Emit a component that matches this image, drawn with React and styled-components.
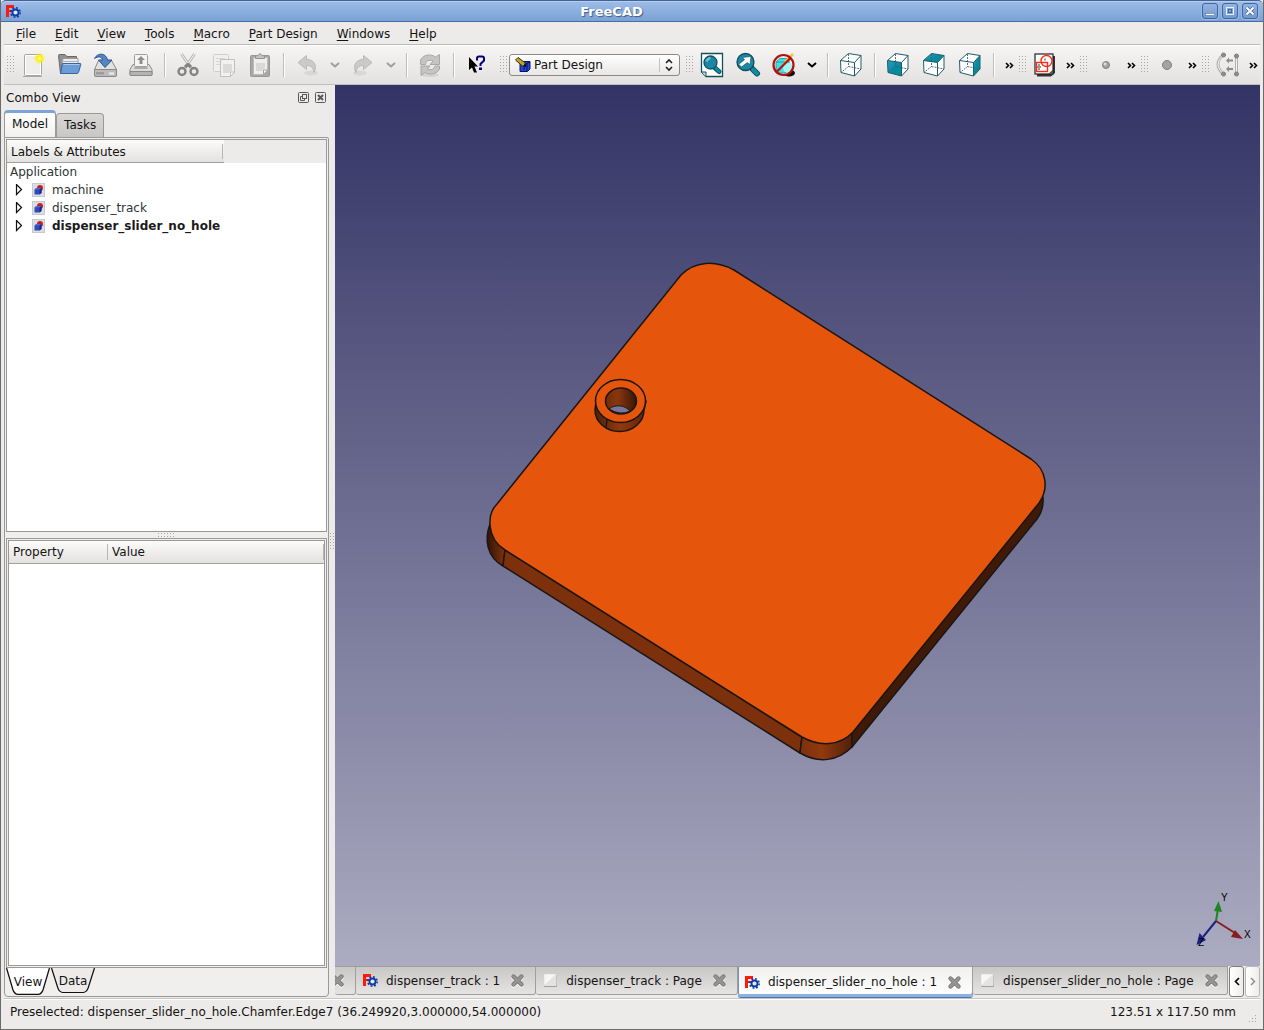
import { useState } from "react";
import styled, { createGlobalStyle, css } from "styled-components";

const GlobalStyle = createGlobalStyle`
    * {
        box-sizing: border-box;
    }

    body {
        margin: 0;
        background: #edebe9;
        color: #141414;
        font-family: "DejaVu Sans", Verdana, sans-serif;
        font-size: 12px;
        line-height: 18px;
    }

    button, select {
        margin: 0;
        padding: 0;
        border: 0;
        background: none;
        color: inherit;
        font: inherit;
    }

    svg {
        display: block;
        flex: none;
    }
`

const dots = css`
    background-image: conic-gradient(at 1px 1px, transparent 75%, #a9a7a5 0);
    background-size: 3px 3px;
`

const Window = styled.div`
    display: flex;
    flex-direction: column;
    height: 100vh;
    border: 1px solid #6b6b6b;
    border-top: 0;
    background: #edebe9;
`

/* title bar */

const TitleBar = styled.header`
    display: flex;
    align-items: center;
    height: 22px;
    padding: 0 5px;
    border-top: 1px solid #456290;
    border-bottom: 1px solid #4a6c9e;
    border-radius: 5px 5px 0 0;
    background: linear-gradient(#9dbce8, #7aa2d6);
    box-shadow: inset 0 1px #b4cdf0;
`

const Title = styled.h1`
    flex: 1;
    margin: 0;
    padding-top: 2px;
    font-size: 13px;
    line-height: 20px;
    color: #fff;
    text-align: center;
    text-shadow: 1px 1px 1px #3d5c8a;
`

const WindowButtons = styled.div`
    display: flex;
    gap: 4px;
`

const WindowButton = styled.button`
    width: 16px;
    height: 16px;
    border: 1px solid #43679b;
    border-radius: 3px;
    background: linear-gradient(#93b4e3, #7199cf);
    box-shadow: 0 0 0 1px #9bbae5;
`

/* menus */

const MenuBar = styled.nav`
    display: flex;
    align-items: center;
    gap: 1px;
    height: 23px;
    margin: 0 3px;
    padding: 0 3px;
    border-bottom: 1px solid #bcbab8;
`

const MenuButton = styled.button`
    padding: 2px 9px 0;
    line-height: 20px;

    u {
        text-underline-offset: 2px;
    }
`

/* toolbars */

const ToolBars = styled.div`
    display: flex;
    align-items: center;
    height: 40px;
    margin: 0 3px;
    border-top: 1px solid #fff;
    border-bottom: 1px solid #c2c0be;
    background: linear-gradient(#f6f5f4, #e4e2e0);
`

const ToolBar = styled.div`
    display: flex;
    align-items: center;
    flex: ${props => props.$grow ? '1' : 'none'};
    margin-right: ${props => props.$gap ? '2px' : '0'};
`

const Handle = styled.span`
    width: 7px;
    height: 18px;
    margin: 0 1px 0 3px;
    ${dots}
`

const ToolButton = styled.button`
    display: flex;
    align-items: center;
    justify-content: center;
    width: ${props => props.$arrow ? '20px' : '36px'};
    height: 36px;
`

const Separator = styled.span`
    width: 2px;
    height: 24px;
    margin: 0 4px 0 5px;
    border-left: 1px solid #bfbdbb;
    background: #fff;
`

const ExtensionButton = styled.button`
    display: flex;
    align-items: center;
    justify-content: center;
    width: 14px;
    height: 36px;
    margin-left: ${props => props.$end ? 'auto' : '0'};
`

const ComboBox = styled.label`
    position: relative;
    width: 171px;
    margin: 0 1px;

    svg {
        position: absolute;
        top: 3px;
        left: 6px;
        pointer-events: none;
    }

    svg:last-child {
        left: auto;
        right: 5px;
    }
`

const WorkbenchSelect = styled.select`
    appearance: none;
    display: block;
    width: 100%;
    height: 22px;
    padding-left: 24px;
    border: 1px solid #8b8987;
    border-radius: 3px;
    background: linear-gradient(#fff, #e9e7e5);
    line-height: 18px;
`

/* main area */

const Main = styled.main`
    display: flex;
    flex: 1;
    min-height: 0;
    padding: 0 3px;
`

const Dock = styled.aside`
    display: flex;
    flex-direction: column;
    width: 325px;
`

const DockTitle = styled.div`
    display: flex;
    align-items: center;
    gap: 6px;
    height: 25px;
    padding: 0 3px 0 2px;
`

const DockName = styled.h2`
    flex: 1;
    margin: 0;
    font-size: 12px;
    font-weight: normal;
`

const TinyButton = styled.button`
    width: 11px;
    height: 11px;
`

const TabRow = styled.div`
    display: flex;
    align-items: flex-end;
    height: 27px;
`

const DockTab = styled.button`
    height: ${props => props.$active ? '27px' : '24px'};
    padding: 0 7px 2px;
    border: 1px solid #9b9997;
    border-bottom: 0;
    border-radius: 4px 4px 0 0;
    background: linear-gradient(#d9d7d5, #c9c7c5);

    ${props => props.$active && css`
        border-top: 3px solid #7ba4da;
        background: linear-gradient(#fff, #f1f0ee);
    `}
`

const TabPane = styled.section`
    display: flex;
    flex-direction: column;
    flex: 1;
    min-height: 0;
    margin-bottom: 1px;
    padding: 1px 1px 0;
    border: 1px solid #9b9997;
    border-radius: 0 2px 4px 4px;
    background: #f0efed;
`

const TreeBox = styled.div`
    flex: 394;
    min-height: 0;
    border: 1px solid #9b9997;
    background: #fff;
`

const TreeHeader = styled.div`
    height: 23px;
    background: #edebe9;
`

const HeaderCell = styled.div`
    position: relative;
    width: 217px;
    height: 23px;
    padding: 0 4px;
    border-bottom: 1px solid #a3a19f;
    background: linear-gradient(#fbfbfa, #e4e2e0);
    line-height: 24px;

    &::after {
        content: "";
        position: absolute;
        top: 4px;
        right: 1px;
        width: 1px;
        height: 15px;
        background: #b8b6b4;
    }
`

const Tree = styled.ul`
    margin: 0;
    padding: 0 3px;
    color: #2e3436;
    list-style: none;
`

const TreeRow = styled.li`
    display: flex;
    align-items: center;
    height: 18px;
    color: ${props => props.$active ? '#1a1a1a' : 'inherit'};
    font-weight: ${props => props.$active ? 'bold' : 'normal'};
`

const Expander = styled.button`
    width: 22px;
    height: 14px;
    padding-left: 5px;
`

const RowLabel = styled.span`
    padding-left: 7px;
`

const Splitter = styled.div`
    display: flex;
    align-items: center;
    justify-content: center;
    height: 6px;
`

const SplitterDots = styled.span`
    width: ${props => props.$vertical ? '4px' : '18px'};
    height: ${props => props.$vertical ? '18px' : '4px'};
    ${dots}
`

const SideSplitter = styled(Splitter)`
    width: 6px;
    height: auto;
`

const PropertyBox = styled.div`
    flex: 429;
    min-height: 0;
    padding: 1px;
    border: 1px solid #9b9997;
`

const PropertyView = styled.div`
    height: 100%;
    border: 1px solid #9b9997;
    background: #fff;
`

const PropertyTable = styled.table`
    width: 100%;
    border-collapse: collapse;
    table-layout: fixed;
`

const PropertyHead = styled.th`
    width: ${props => props.$width || 'auto'};
    padding: 0;
    border-bottom: 1px solid #a3a19f;
    background: linear-gradient(#fbfbfa, #e4e2e0);
    font-weight: normal;
    text-align: left;
`

const HeadText = styled.div`
    height: 16px;
    margin: 3px 0;
    padding: 0 4px;
    border-right: 1px solid #b8b6b4;
    line-height: 17px;
`

const BottomTabs = styled.div`
    display: flex;
    align-items: flex-start;
    gap: 1px;
    height: 28px;
`

const BottomTab = styled.button`
    position: relative;
    width: 44px;
    height: ${props => props.$active ? '27px' : '25px'};

    svg {
        position: absolute;
        top: 0;
        left: 0;
        width: 100%;
        height: 100%;
    }

    span {
        position: relative;
    }
`

/* documents */

const Documents = styled.section`
    display: flex;
    flex-direction: column;
    flex: 1;
    min-width: 0;
`

const Viewport = styled.div`
    position: relative;
    flex: 1;
    min-height: 0;
    background: linear-gradient(#333365, #ababc1);
`

const Scene = styled.svg`
    width: 100%;
    height: 100%;
`

const Triad = styled.svg`
    position: absolute;
    right: 2px;
    bottom: 17px;
`

const DocumentTabs = styled.div`
    display: flex;
    align-items: flex-start;
    height: 32px;
`

const DocumentTab = styled.div`
    display: flex;
    align-items: center;
    flex: ${props => props.$last ? '1' : 'none'};
    gap: 8px;
    height: 29px;
    padding: 0 ${props => props.$last ? '7px' : '10px'} 0 7px;
    border: 1px solid #a09e9c;
    border-width: 1px 1px 1px 0;
    border-radius: 0 0 3px 3px;
    background: linear-gradient(#c9c7c5, #e6e4e2);

    ${props => props.$active && css`
        height: 32px;
        border-bottom: 1px solid #4a76b0;
        background: linear-gradient(#f1f0ee, #fff);
        box-shadow: inset 0 -3px #8cb3e0, inset 1px 0 #6f93c4;
    `}

    ${props => props.$clipped && css`
        width: 21px;
        padding-left: 0;
        justify-content: flex-end;
        overflow: hidden;
    `}
`

const TabLabel = styled.button`
    display: flex;
    align-items: center;
    gap: 8px;
    white-space: nowrap;
`

const CloseButton = styled.button`
    flex: none;
    width: 15px;
    height: 15px;
    margin-left: 2px;

    svg {
        filter: drop-shadow(0 1px 0 #fff);
    }
`

const ScrollButton = styled.button`
    display: flex;
    flex: none;
    align-items: center;
    justify-content: center;
    width: 15px;
    height: 31px;
    margin-left: 1px;
    border: 1px solid ${props => props.disabled ? '#bab8b6' : '#7f7d7b'};
    border-radius: 3px;
    background: linear-gradient(90deg, #fff, #efedeb);
    color: ${props => props.disabled ? '#8a8886' : '#000'};
`

const StatusBar = styled.footer`
    position: relative;
    display: flex;
    align-items: center;
    justify-content: space-between;
    height: 31px;
    margin: 0 3px;
    padding: 0 24px 4px 6px;
    border-top: 1px solid #c8c6c4;
    box-shadow: inset 0 1px #fff;
`

const SizeGrip = styled.span`
    position: absolute;
    right: 2px;
    bottom: 5px;
    width: 12px;
    height: 12px;
    clip-path: polygon(100% 0, 100% 100%, 0 100%);
    ${dots}
`

/* icons */

const teal = '#0a8ea5';
const tealDark = '#14505c';

const FreeCadIcon = () => (
    <svg width="15" height="15" viewBox="0 0 15 15">
        <g fill="#ff1a0a">
            <rect x="0" y="1" width="3" height="12" />
            <rect x="0" y="1" width="8" height="3" />
            <rect x="3" y="6" width="3" height="2" />
        </g>
        <circle cx="9.5" cy="8.5" r="4.7" fill="none" stroke="#0c3ba6" strokeWidth="1.6" strokeDasharray="1.8 1.89" />
        <circle cx="9.5" cy="8.5" r="3" fill="#dfe9f8" stroke="#0c3ba6" strokeWidth="1.8" />
    </svg>
);

const PageIcon = () => (
    <svg width="15" height="15" viewBox="0 0 15 15">
        <rect x="1" y="2" width="13" height="12" rx="1" fill="#a3a1a0" />
        <rect x="1" y="1" width="12.5" height="12" rx="1" fill="#e4e3e2" />
        <path d="M1.5 1.5H12.5L1.5 12Z" fill="#f7f7f6" />
    </svg>
);

const CrossIcon = () => (
    <svg width="15" height="15" viewBox="0 0 15 15">
        <path d="M3.5 3.5 11.5 11.5M11.5 3.5 3.5 11.5" stroke="#777573" strokeWidth="4.4" strokeLinecap="round" />
        <path d="M3.5 3.5 11.5 11.5M11.5 3.5 3.5 11.5" stroke="#969492" strokeWidth="2.6" strokeLinecap="round" />
    </svg>
);

const DocIcon = () => (
    <svg width="13" height="14" viewBox="0 0 13 14">
        <rect x="0.5" y="0.5" width="12" height="13" fill="#dcdde2" stroke="#c6c8cd" />
        <circle cx="8" cy="5" r="3" fill="#c32222" />
        <path d="M2.5 6.5 4.5 5H9.5V10L7.5 11.5H2.5Z" fill="#3049bd" />
        <path d="M2.5 6.5 4.5 5H9.5L7.5 6.5Z" fill="#5068cf" />
        <path d="M7.5 6.5 9.5 5V10L7.5 11.5Z" fill="#182a83" />
    </svg>
);

const NewIcon = () => (
    <svg width="26" height="26" viewBox="0 0 26 26">
        <defs>
            <radialGradient id="glow">
                <stop offset="0" stopColor="#fffde0" />
                <stop offset="0.4" stopColor="#fff200" />
                <stop offset="1" stopColor="#fff200" stopOpacity="0" />
            </radialGradient>
        </defs>
        <path d="M3 24.5H22" stroke="#aaa8a6" />
        <rect x="4.5" y="2.5" width="17" height="21" rx="1" fill="#ededeb" stroke="#a6a4a2" />
        <rect x="5.5" y="3.5" width="15" height="19" fill="none" stroke="#fff" />
        <circle cx="19.5" cy="6.5" r="6" fill="url(#glow)" />
    </svg>
);

const OpenIcon = () => (
    <svg width="26" height="26" viewBox="0 0 26 26">
        <path d="M2.5 3.5Q2.5 2.5 3.5 2.5H9L11 4.5H20.5V10H7L4.5 21.5Z" fill="#91908e" stroke="#696765" />
        <path d="M7 6.5H22V12H6Z" fill="#ededec" stroke="#9b9997" />
        <path d="M6 9.5H21" stroke="#b0aeac" />
        <path d="M6.5 11.5H24.5Q25 11.5 24.8 12.5L22.5 20.5Q22 21.5 21 21.5H4.5Z" fill="#6b9dd6" stroke="#3465a4" />
        <path d="M7.5 12.5H23.5" stroke="#a9c8ec" />
    </svg>
);

const SaveIcon = () => (
    <svg width="26" height="26" viewBox="0 0 26 26">
        <path d="M6.5 8.5H19.5L24.5 17.5V23Q24.5 24.5 23 24.5H3.5Q2.5 24.5 2.5 23V17.5Z" fill="#e2e1df" stroke="#8b8987" />
        <path d="M2.5 17.5H24.5V23Q24.5 24.5 23 24.5H3.5Q2.5 24.5 2.5 23Z" fill="#bdbbb9" stroke="#8b8987" />
        <path d="M5 20V22.5M7 20V22.5M9 20V22.5M11 20V22.5" stroke="#7e7c7a" />
        <path d="M17 21.5H22" stroke="#efefee" strokeWidth="2" />
        <path d="M2.5 6.5C5 1 14 0 15.5 8H20L13 15.5 6.5 8H10.5C10 4.5 6 4 2.5 6.5Z" fill="#5584bf" stroke="#2b5690" />
    </svg>
);

const PrintIcon = () => (
    <svg width="26" height="26" viewBox="0 0 26 26">
        <path d="M5 12.5H21L24 17.5V22.5Q24 23.5 23 23.5H3Q2 23.5 2 22.5V17.5Z" fill="#dddcda" stroke="#8b8987" />
        <path d="M7 14.5H19L20 17H6Z" fill="#adabaa" />
        <rect x="6.5" y="2.5" width="13" height="12" rx="1" fill="#f4f4f3" stroke="#a09e9c" />
        <path d="M13 4 17 8H14.5V12H11.5V8H9Z" fill="#8f8d8b" />
        <path d="M2 19.5H24V22.5Q24 23.5 23 23.5H3Q2 23.5 2 22.5Z" fill="#b5b3b1" stroke="#8b8987" />
    </svg>
);

const CutIcon = () => (
    <svg width="26" height="26" viewBox="0 0 26 26" fill="none">
        <path d="M6.5 2 16 16M19.5 2 10 16" stroke="#b5b3b1" strokeWidth="3" />
        <path d="M6.5 2 16 16M19.5 2 10 16" stroke="#eeedec" strokeWidth="1.2" />
        <path d="M10 15 13 12.5 16 15" stroke="#858381" strokeWidth="3" />
        <ellipse cx="7" cy="19.5" rx="3.5" ry="3.5" stroke="#858381" strokeWidth="2.4" />
        <ellipse cx="19" cy="19.5" rx="3.5" ry="3.5" stroke="#858381" strokeWidth="2.4" />
    </svg>
);

const CopyIcon = () => (
    <svg width="26" height="26" viewBox="0 0 26 26">
        <rect x="2.5" y="2.5" width="15" height="17" rx="1" fill="#f0efee" stroke="#d0cecc" />
        <path d="M5 6.5H14M5 9.5H14M5 12.5H9" stroke="#d8d6d4" />
        <path d="M9.5 7.5H23.5V20L19.5 24.5H9.5Z" fill="#f2f1f0" stroke="#c2c0be" />
        <path d="M12 12H21V18L18 21H12Z" fill="#dbdad8" />
        <path d="M23.5 20H19.5V24.5Z" fill="#fff" stroke="#c2c0be" />
    </svg>
);

const PasteIcon = () => (
    <svg width="26" height="26" viewBox="0 0 26 26">
        <rect x="3.5" y="3.5" width="19" height="21" rx="1" fill="#a9a7a5" stroke="#9a9896" />
        <path d="M6.5 5.5H20.5V18L16.5 22.5H6.5Z" fill="#efeeed" stroke="#bcbab8" />
        <path d="M9 11H18V16L15 19H9Z" fill="#dad8d6" />
        <path d="M20.5 18H16.5V22.5Z" fill="#fff" stroke="#a5a3a1" />
        <path d="M8.5 6.5V4L11 3.5Q13 0 15 3.5L17.5 4V6.5Z" fill="#c6c4c2" stroke="#959391" />
    </svg>
);

const UndoIcon = ({ flip }) => (
    <svg width="26" height="26" viewBox="0 0 26 26">
        <ellipse cx={flip ? 10 : 17} cy="21" rx="7" ry="2.5" fill="#dad8d6" />
        <g transform={flip ? 'translate(26 0) scale(-1 1)' : undefined}>
            <path d="M4 10.5 12.5 3.5V7.5C20 7.5 23.5 13 20 20.5 19.5 15.5 17 13.5 12.5 13.5V17.5Z" fill="#cccac8" stroke="#bbb9b7" />
        </g>
    </svg>
);

const RefreshIcon = () => (
    <svg width="26" height="26" viewBox="0 0 26 26">
        <ellipse cx="13" cy="23" rx="9" ry="2" fill="#d6d4d2" />
        <path d="M3.5 12.5V8C6 2.5 14 1.5 18.5 5L22.5 2.5V12.5H13L16 9C12 7.5 9 8.5 8.5 12.5Z" fill="#c6c4c2" stroke="#aaa8a6" />
        <path d="M22.5 14V17C20 22.5 12 23.5 8 20.5L4 23.5V14H13L10.5 17C14 18.5 17 17.5 18 14Z" fill="#c6c4c2" stroke="#aaa8a6" />
    </svg>
);

const WhatsThisIcon = () => (
    <svg width="26" height="26" viewBox="0 0 26 26">
        <path d="M5 5V18L8 15.5 10 20.5H13L10.5 14.5H14Z" fill="#000" />
        <path d="M13 8.5V6.5Q13 4.5 15 4.5H18Q20 4.5 20 6.5V8.5L16.5 12V14" fill="none" stroke="#00007f" strokeWidth="2" />
        <rect x="15" y="15.5" width="3" height="2.5" fill="#00007f" />
    </svg>
);

const ChevronIcon = ({ color = '#000' }) => (
    <svg width="10" height="6" viewBox="0 0 10 6">
        <path d="M1 1 5 4.5 9 1" fill="none" stroke={color} strokeWidth="2" />
    </svg>
);

const MoreIcon = () => (
    <svg width="9" height="7" viewBox="0 0 9 7">
        <path d="M1 1 3.5 3.5 1 6M5 1 7.5 3.5 5 6" fill="none" stroke="#000" strokeWidth="1.6" />
    </svg>
);

const PartDesignIcon = () => (
    <svg width="16" height="16" viewBox="0 0 16 16">
        <path d="M5 6.5 8 4.5H15V12L12.5 14.5H5Z" fill="#1c46e0" stroke="#0a1357" />
        <path d="M12 6.5V14M5 6.5H12L15 4.5" stroke="#0a1357" fill="none" />
        <path d="M7 8.5H11M9 8.5V13" stroke="#0a1357" />
        <path d="M0.5 3 3 0.5 10.5 6 8 9.5Z" fill="#b59a2c" stroke="#3b3210" />
        <path d="M2 2 9 8" stroke="#e3c95a" strokeDasharray="1 1" />
        <path d="M8 9.5 11.5 10 10.5 6Z" fill="#111" />
    </svg>
);

const SpinIcon = () => (
    <svg width="17" height="16" viewBox="0 0 17 16" fill="none">
        <path d="M1.5 1V15" stroke="#c4c2c0" />
        <path d="M8 6 11 3 14 6M8 10 11 13 14 10" stroke="#222" strokeWidth="1.6" />
    </svg>
);

const FitIcon = () => (
    <svg width="24" height="26" viewBox="0 0 24 26">
        <path d="M1.5 1.5H22.5V24.5H6L1.5 20Z" fill="#fff" stroke={tealDark} strokeWidth="1.3" />
        <path d="M1.5 20H6V24.5" fill="#cfe0e3" stroke={tealDark} />
        <path d="M14.5 15.5 19 19.5" stroke={tealDark} strokeWidth="5" strokeLinecap="round" />
        <path d="M15.5 16 19 19.5" stroke={teal} strokeWidth="3" strokeLinecap="round" />
        <circle cx="10.5" cy="10.5" r="6.5" fill="#1b86a6" stroke={tealDark} strokeWidth="1.3" />
        <path d="M6.5 9.5Q7.5 6.5 10.5 6" fill="none" stroke="#6cbfd8" strokeWidth="2.5" />
    </svg>
);

const ZoomIcon = () => (
    <svg width="26" height="26" viewBox="0 0 26 26">
        <path d="M17 16.5 22 21.5" stroke={tealDark} strokeWidth="6" strokeLinecap="round" />
        <path d="M18 17.5 22 21.5" stroke={teal} strokeWidth="4" strokeLinecap="round" />
        <circle cx="10.5" cy="10" r="8.5" fill="#1b86a6" stroke={tealDark} strokeWidth="1.3" />
        <path d="M16 4.5 15 12.5 12.2 10.5 6.5 15 3.8 12.2 9.5 7.8 7.5 5.5Z" fill="#fff" stroke={tealDark} strokeWidth="0.6" />
    </svg>
);

const DrawStyleIcon = () => (
    <svg width="26" height="26" viewBox="0 0 26 26">
        <ellipse cx="18" cy="21" rx="6" ry="3.5" fill="#111" />
        <circle cx="12.5" cy="13" r="9.5" fill="#dff3f2" />
        <path d="M5 10 9 6.5H18V17L14.5 21H5Z" fill="#3fe0e0" stroke="#3a9aa0" />
        <path d="M5 10H14.5V21M14.5 10 18 6.5" fill="none" stroke="#3a9aa0" />
        <circle cx="17" cy="16" r="5" fill="#a5f5f2" />
        <path d="M14 10 22 2" stroke="#e8c93c" strokeWidth="2.5" />
        <circle cx="12.5" cy="13" r="10" fill="none" stroke="#b80e0e" strokeWidth="2.2" />
        <path d="M5.5 6 19.5 20" stroke="#b80e0e" strokeWidth="0" />
        <path d="M5.5 20 19.5 6" stroke="#b80e0e" strokeWidth="2.2" />
    </svg>
);

// face is the side of the cube that is filled
const CubeIcon = ({ face }) => (
    <svg width="24" height="26" viewBox="0 0 24 26" strokeLinejoin="round">
        <defs>
            <linearGradient id="face" x1="0" y1="0" x2="1" y2="1">
                <stop offset="0" stopColor="#2f9fc4" />
                <stop offset="0.5" stopColor="#078aa0" />
            </linearGradient>
        </defs>
        <path d="M1.5 8.5 9.5 1.5 22 3.5V17L15.5 24 2 20.5Z" fill="#fff" />
        {face === 'front' && <path d="M1.5 8.5 15.5 10.5V24L2 20.5Z" fill="url(#face)" />}
        {face === 'top' && <path d="M1.5 8.5 9.5 1.5 22 3.5 15.5 10.5Z" fill="url(#face)" />}
        {face === 'right' && <path d="M15.5 10.5 22 3.5V17L15.5 24Z" fill="url(#face)" />}
        <path d="M9.5 2V14.5L2 20.5M9.5 14.5 22 17" fill="none" stroke="#2f6670" strokeDasharray="2 1" strokeWidth="0.9" />
        <path d="M1.5 8.5 9.5 1.5 22 3.5V17L15.5 24 2 20.5ZM1.5 8.5 15.5 10.5 22 3.5M15.5 10.5V24" fill="none" stroke="#1f5c68" />
    </svg>
);

const SketchIcon = () => (
    <svg width="24" height="26" viewBox="0 0 24 26">
        <path d="M4 4H22V21L18 24.5H4Z" fill="#333" />
        <rect x="2" y="2" width="18" height="20" fill="#fff" stroke="#222" strokeWidth="1.2" />
        <path d="M15 22 20 17.5V22Z" fill="#555" />
        <path d="M4 15H8M6 12V18M11 7.5H13" stroke="#999" strokeWidth="2" />
        <rect x="3.5" y="10.5" width="11" height="9" fill="none" stroke="#ff2a12" strokeWidth="1.4" />
        <circle cx="13.5" cy="9" r="5.5" fill="none" stroke="#ff2a12" strokeWidth="1.4" />
    </svg>
);

const DotIcon = ({ r }) => (
    <svg width="12" height="12" viewBox="0 0 12 12">
        <circle cx="6" cy="6" r={r} fill="#a3a3a3" stroke="#808080" />
        {r < 4 && <circle cx="5" cy="5" r="1.5" fill="#dedede" />}
    </svg>
);

const ConstraintIcon = () => (
    <svg width="26" height="26" viewBox="0 0 26 26">
        <path d="M8 3Q-2 12 8 22" fill="none" stroke="#b0b0b0" strokeWidth="3" />
        <path d="M8 3Q-2 12 8 22" fill="none" stroke="#f2f2f2" />
        <path d="M21.5 3V22" stroke="#b0b0b0" strokeWidth="3" />
        <path d="M21.5 3V22" stroke="#f2f2f2" />
        <path d="M11 8.5 14 5.5V7.5H18V9.5H14V11.5ZM11 17 14 14V16H18V18H14V20Z" fill="#8b8b8b" />
        <g fill="#8f8f8f" stroke="#7b7b7b">
            <circle cx="8.5" cy="3" r="2" />
            <circle cx="21.5" cy="4" r="2" />
            <circle cx="8.5" cy="22" r="2" />
            <circle cx="21.5" cy="22" r="2" />
        </g>
    </svg>
);

const FloatIcon = () => (
    <svg width="11" height="11" viewBox="0 0 11 11" fill="none" stroke="#5a5856">
        <rect x="0.5" y="0.5" width="10" height="10" rx="1" />
        <rect x="4.5" y="2.5" width="4" height="4" />
        <path d="M4 4.5H2.5V8.5H6.5V7" />
    </svg>
);

const DockCloseIcon = () => (
    <svg width="11" height="11" viewBox="0 0 11 11" fill="none" stroke="#5a5856">
        <rect x="0.5" y="0.5" width="10" height="10" rx="1" />
        <path d="M3 3 8 8M8 3 3 8" strokeWidth="2" />
    </svg>
);

const ExpanderIcon = () => (
    <svg width="8" height="12" viewBox="0 0 8 12">
        <path d="M1.5 0.5 6.5 5.5 1.5 10.5Z" fill="#fff" stroke="#111" strokeWidth="1.2" />
    </svg>
);

const Plate = () => (
    <Scene viewBox="335 85 925 881" role="img" aria-label="dispenser_slider_no_hole">
        <defs>
            <linearGradient id="corner" gradientUnits="userSpaceOnUse" x1="486" y1="0" x2="506" y2="0">
                <stop offset="0" stopColor="#2b1206" />
                <stop offset="1" stopColor="#86340d" />
            </linearGradient>
            <linearGradient id="nose" gradientUnits="userSpaceOnUse" x1="800" y1="0" x2="854" y2="0">
                <stop offset="0" stopColor="#7c300c" />
                <stop offset="0.4" stopColor="#92390e" />
                <stop offset="1" stopColor="#4c1f0a" />
            </linearGradient>
            <linearGradient id="ring" gradientUnits="userSpaceOnUse" x1="594" y1="0" x2="646" y2="0">
                <stop offset="0" stopColor="#4c1f0a" />
                <stop offset="0.5" stopColor="#93390d" />
                <stop offset="1" stopColor="#5a250b" />
            </linearGradient>
            <linearGradient id="bore" gradientUnits="userSpaceOnUse" x1="605" y1="0" x2="637" y2="0">
                <stop offset="0" stopColor="#6f2b0b" />
                <stop offset="0.4" stopColor="#8a360d" />
                <stop offset="1" stopColor="#351607" />
            </linearGradient>
        </defs>
        <g stroke="#1b1614" strokeWidth="1.5" strokeLinejoin="round">
            <path d="M490 524C484 540 487 557 503 566L505 550Z" fill="url(#corner)" />
            <path d="M505 550 503 566 800 753 802 737Z" fill="#7c300c" />
            <path d="M802 737 800 753C819 764 838 761 852 747V733Z" fill="url(#nose)" />
            <path d="M852 733V747L1037 519Q1044 510 1043 497Z" fill="#401a08" />
            <path d="M505 550 802 737C820 747 840 746 853 732L1039 503C1049 489 1047 470 1031 459L734 270C715 260 695 261 681 275L497 504C487 514 486 538 505 550Z" fill="#e6550c" />
            <path d="M596 401 595 410A24.5 21.5 0 0 0 644 410L646 401Z" fill="url(#ring)" />
            <ellipse cx="620.5" cy="401" rx="25" ry="21.5" fill="#e6550c" />
            <ellipse cx="621" cy="401" rx="15.5" ry="13" fill="url(#bore)" />
            <path d="M609 409C615 404 625 405 630 411Q621 416 609 409Z" fill="#77779c" strokeWidth="1" />
            <path d="M607 419 606 428" />
        </g>
    </Scene>
);

const Axes = () => (
    <Triad width="64" height="58" viewBox="1194 891 64 58" fontFamily="Liberation Sans, sans-serif" fontSize="10">
        <path d="M1216 921 1218 909" stroke="#1f861f" strokeWidth="2" />
        <path d="M1218.5 901 1222 912 1214 911Z" fill="#1f861f" />
        <path d="M1216 921 1235 933" stroke="#861f1f" strokeWidth="2" />
        <path d="M1243 939 1231 937 1235 930Z" fill="#861f1f" />
        <path d="M1216 921 1203 937" stroke="#1f1f86" strokeWidth="2" />
        <path d="M1196.5 945 1199.5 933 1206 940Z" fill="#1f1f86" />
        <text x="1221" y="901">Y</text>
        <text x="1244" y="938">X</text>
        <text x="1198" y="946">Z</text>
    </Triad>
);

const TrapezoidShape = ({ fill }) => (
    <svg viewBox="0 0 44 27" preserveAspectRatio="none">
        <path d="M0.5 0 7 22Q8.5 26 12 26.5H32Q35.5 26 37 22L43.5 0" fill={fill} stroke="#111" strokeWidth="1.3" />
    </svg>
);

const menus = ['File', 'Edit', 'View', 'Tools', 'Macro', 'Part Design', 'Windows', 'Help'];

const documents = ['machine', 'dispenser_track', 'dispenser_slider_no_hole'];

const openTabs = [
    { label: 'dispenser_track : 1', Icon: FreeCadIcon },
    { label: 'dispenser_track : Page', Icon: PageIcon },
    { label: 'dispenser_slider_no_hole : 1', Icon: FreeCadIcon },
    { label: 'dispenser_slider_no_hole : Page', Icon: PageIcon },
];

const Tool = ({ name, Icon, ...rest }) => (
    <ToolButton title={name} aria-label={name}>
        <Icon {...rest} />
    </ToolButton>
);

const Arrow = ({ name, color }) => (
    <ToolButton $arrow aria-label={name}>
        <ChevronIcon color={color} />
    </ToolButton>
);

const Extension = ({ end }) => (
    <ExtensionButton $end={end} aria-label="More tools">
        <MoreIcon />
    </ExtensionButton>
);

const SmallToolBar = ({ name, Icon, ...rest }) => (
    <ToolBar>
        <Handle />
        <Tool name={name} Icon={Icon} {...rest} />
        <Extension />
    </ToolBar>
);

const ComboView = () => {

    const [tab, setTab] = useState('Model');
    const [view, setView] = useState('View');

    return (
        <Dock>
            <DockTitle>
                <DockName>Combo View</DockName>
                <TinyButton aria-label="Float"><FloatIcon /></TinyButton>
                <TinyButton aria-label="Close"><DockCloseIcon /></TinyButton>
            </DockTitle>
            <TabRow role="tablist">
                {['Model', 'Tasks'].map(name => (
                    <DockTab key={name} role="tab" aria-selected={tab === name} $active={tab === name} onClick={() => setTab(name)}>{name}</DockTab>
                ))}
            </TabRow>
            <TabPane>
                <TreeBox>
                    <TreeHeader>
                        <HeaderCell>Labels &amp; Attributes</HeaderCell>
                    </TreeHeader>
                    <Tree>
                        <TreeRow>Application</TreeRow>
                        {documents.map(name => (
                            <TreeRow key={name} $active={name === 'dispenser_slider_no_hole'}>
                                <Expander aria-label={'Expand ' + name}><ExpanderIcon /></Expander>
                                <DocIcon />
                                <RowLabel>{name}</RowLabel>
                            </TreeRow>
                        ))}
                    </Tree>
                </TreeBox>
                <Splitter><SplitterDots /></Splitter>
                <PropertyBox>
                    <PropertyView>
                        <PropertyTable>
                            <thead>
                                <tr>
                                    <PropertyHead $width="99px"><HeadText>Property</HeadText></PropertyHead>
                                    <PropertyHead><HeadText>Value</HeadText></PropertyHead>
                                </tr>
                            </thead>
                        </PropertyTable>
                    </PropertyView>
                </PropertyBox>
                <BottomTabs role="tablist">
                    {['View', 'Data'].map(name => (
                        <BottomTab key={name} role="tab" aria-selected={view === name} $active={view === name} onClick={() => setView(name)}>
                            <TrapezoidShape fill={view === name ? '#fff' : '#edebe9'} />
                            <span>{name}</span>
                        </BottomTab>
                    ))}
                </BottomTabs>
            </TabPane>
        </Dock>
    );
}

const DocumentArea = () => {

    const [current, setCurrent] = useState(2);

    return (
        <Documents>
            <Viewport>
                <Plate />
                <Axes />
            </Viewport>
            <DocumentTabs>
                <DocumentTab $clipped>
                    <CloseButton aria-label="Close"><CrossIcon /></CloseButton>
                </DocumentTab>
                {openTabs.map(({ label, Icon }, i) => (
                    <DocumentTab key={label} $active={i === current} $last={i === openTabs.length - 1}>
                        <TabLabel onClick={() => setCurrent(i)}><Icon />{label}</TabLabel>
                        <CloseButton aria-label={'Close ' + label}><CrossIcon /></CloseButton>
                    </DocumentTab>
                ))}
                <ScrollButton aria-label="Scroll left">
                    <svg width="6" height="9" viewBox="0 0 6 9"><path d="M5 1 1.5 4.5 5 8" fill="none" stroke="currentColor" strokeWidth="1.6" /></svg>
                </ScrollButton>
                <ScrollButton aria-label="Scroll right" disabled>
                    <svg width="6" height="9" viewBox="0 0 6 9"><path d="M1 1 4.5 4.5 1 8" fill="none" stroke="currentColor" strokeWidth="1.4" /></svg>
                </ScrollButton>
            </DocumentTabs>
        </Documents>
    );
}

const App = () => {

    return (
        <>
            <GlobalStyle />
            <Window>
                <TitleBar>
                    <FreeCadIcon />
                    <Title>FreeCAD</Title>
                    <WindowButtons>
                        <WindowButton aria-label="Minimize">
                            <svg width="14" height="14" viewBox="0 0 14 14"><rect x="2.5" y="9.5" width="9" height="2" fill="#fff" stroke="#43679b" strokeWidth="0.5" /></svg>
                        </WindowButton>
                        <WindowButton aria-label="Maximize">
                            <svg width="14" height="14" viewBox="0 0 14 14" fill="none" stroke="#e9f1fc"><rect x="3.5" y="3.5" width="7" height="7" /><rect x="5.5" y="5.5" width="3" height="3" stroke="#43679b" /></svg>
                        </WindowButton>
                        <WindowButton aria-label="Close window">
                            <svg width="14" height="14" viewBox="0 0 14 14"><path d="M3.5 3.5 10.5 10.5M10.5 3.5 3.5 10.5" stroke="#43679b" strokeWidth="3.5" /><path d="M3.5 3.5 10.5 10.5M10.5 3.5 3.5 10.5" stroke="#fff" strokeWidth="2" /></svg>
                        </WindowButton>
                    </WindowButtons>
                </TitleBar>
                <MenuBar>
                    {menus.map(name => (
                        <MenuButton key={name}><u>{name[0]}</u>{name.slice(1)}</MenuButton>
                    ))}
                </MenuBar>
                <ToolBars>
                    <ToolBar $gap>
                        <Handle />
                        <Tool name="New" Icon={NewIcon} />
                        <Tool name="Open" Icon={OpenIcon} />
                        <Tool name="Save" Icon={SaveIcon} />
                        <Tool name="Print" Icon={PrintIcon} />
                        <Separator />
                        <Tool name="Cut" Icon={CutIcon} />
                        <Tool name="Copy" Icon={CopyIcon} />
                        <Tool name="Paste" Icon={PasteIcon} />
                        <Separator />
                        <Tool name="Undo" Icon={UndoIcon} />
                        <Arrow name="Undo list" color="#a09e9c" />
                        <Tool name="Redo" Icon={UndoIcon} flip />
                        <Arrow name="Redo list" color="#a09e9c" />
                        <Separator />
                        <Tool name="Refresh" Icon={RefreshIcon} />
                        <Separator />
                        <Tool name="What's this?" Icon={WhatsThisIcon} />
                    </ToolBar>
                    <ToolBar $gap>
                        <Handle />
                        <ComboBox>
                            <WorkbenchSelect aria-label="Workbench">
                                <option>Part Design</option>
                            </WorkbenchSelect>
                            <PartDesignIcon />
                            <SpinIcon />
                        </ComboBox>
                    </ToolBar>
                    <ToolBar $grow>
                        <Handle />
                        <Tool name="Fit all" Icon={FitIcon} />
                        <Tool name="Fit selection" Icon={ZoomIcon} />
                        <Tool name="Draw style" Icon={DrawStyleIcon} />
                        <Arrow name="Draw style list" />
                        <Separator />
                        <Tool name="Axonometric" Icon={CubeIcon} />
                        <Separator />
                        <Tool name="Front" Icon={CubeIcon} face="front" />
                        <Tool name="Top" Icon={CubeIcon} face="top" />
                        <Tool name="Right" Icon={CubeIcon} face="right" />
                        <Separator />
                        <Extension end />
                    </ToolBar>
                    <SmallToolBar name="Create sketch" Icon={SketchIcon} />
                    <SmallToolBar name="Point" Icon={DotIcon} r={3.5} />
                    <SmallToolBar name="Constrain coincident" Icon={DotIcon} r={4.5} />
                    <SmallToolBar name="Close shape" Icon={ConstraintIcon} />
                </ToolBars>
                <Main>
                    <ComboView />
                    <SideSplitter><SplitterDots $vertical /></SideSplitter>
                    <DocumentArea />
                </Main>
                <StatusBar>
                    <span>Preselected: dispenser_slider_no_hole.Chamfer.Edge7 (36.249920,3.000000,54.000000)</span>
                    <span>123.51 x 117.50 mm</span>
                    <SizeGrip />
                </StatusBar>
            </Window>
        </>
    );
}

export default App;
